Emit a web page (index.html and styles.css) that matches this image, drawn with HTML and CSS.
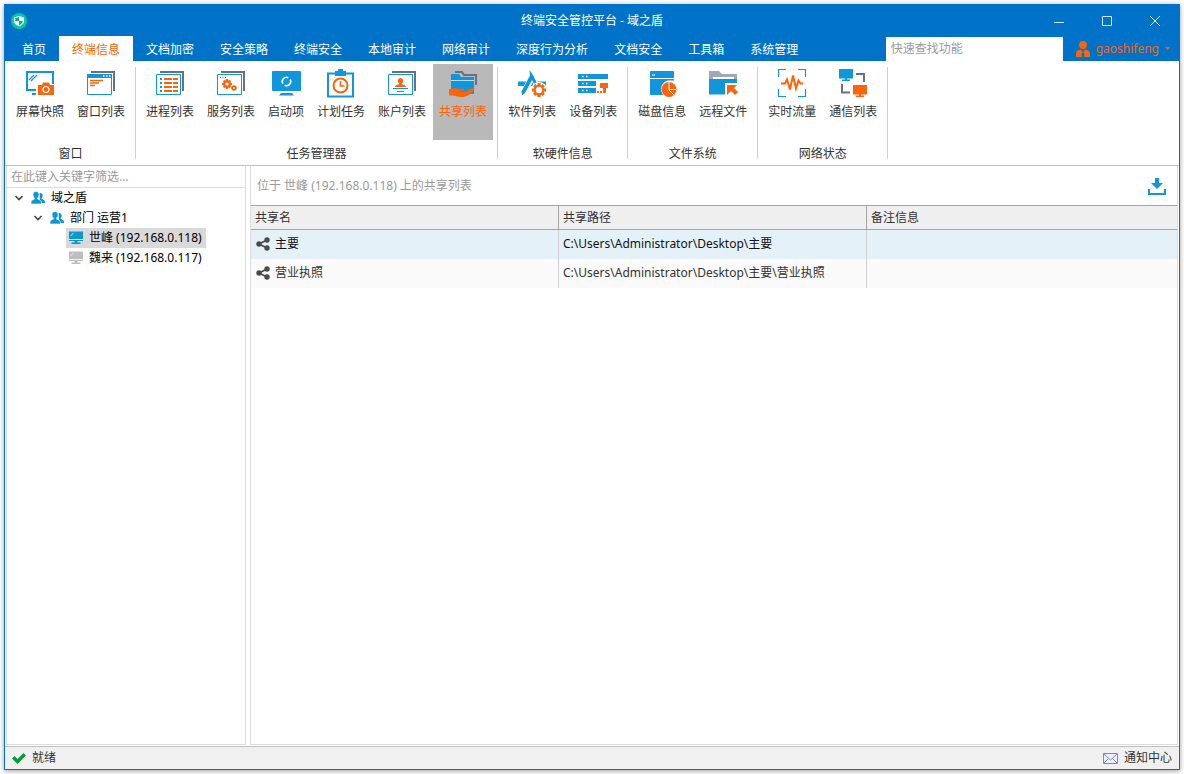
FILE: index.html
```html
<!DOCTYPE html>
<html lang="zh-CN">
<head>
<meta charset="utf-8">
<title>终端安全管控平台 - 域之盾</title>
<link rel="stylesheet" href="styles.css">
</head>
<body>
<svg class="defs" aria-hidden="true">
  <symbol id="people" viewBox="0 0 14 14"><path d="M8.500 2c2-.3 3.200 1 3.200 2.800 0 1.200-.7 2.200-1.200 2.700.3.800 3.500 1.200 3.500 3.500v1H9z"/><path d="M5 .5c2 0 3 1.400 3 3.300 0 1.500-.6 2.700-1.400 3.300v1C7.300 8.600 10.500 9.200 10.500 11.200V13H0v-1.800C0 9.200 2.700 8.600 3.400 8.100v-1C2.600 6.500 2 5.300 2 3.800 2 1.900 3 .5 5 .5z" stroke="#fff" stroke-width=".6"/></symbol>
  <symbol id="pc" viewBox="0 0 14 13"><path d="M0 0h14v9.500H0z"/><path d="M5.500 9h3v2h3v1.500h-9V11h3z"/><path d="M1.500 4.500L4.500 1.500M0 8h14" stroke="#fff" stroke-width=".8" fill="none"/></symbol>
  <symbol id="chevron" viewBox="0 0 10 8"><path d="M1.500 2L5 5.500 8.500 2" fill="none" stroke="#444" stroke-width="1.600"/></symbol>
  <symbol id="share" viewBox="0 0 14 14"><path d="M11 3L3 7l8 4" fill="none" stroke="#4a4a4a" stroke-width="1.800"/><g fill="#4a4a4a"><circle cx="11" cy="3" r="2.700"/><circle cx="3" cy="7" r="2.700"/><circle cx="11" cy="11" r="2.700"/></g></symbol>
  <symbol id="card" viewBox="0 0 30 30"><path d="M5 2h24v20h-2V4H5z" fill="#667189"/><path d="M1.500 5.500h24v20h-24z" fill="#fff" stroke="#1296db"/></symbol>
  <symbol id="gear" viewBox="-8 -8 16 16"><g stroke="#fa640a" stroke-width="3.500"><path d="M0-8v16M-8 0h16M-5.500-5.500L5.500 5.500M5.500-5.500L-5.500 5.500"/></g><circle r="6" fill="#fa640a"/><circle r="2.500" fill="#fff"/></symbol>
</svg>

<div class="window">
  <header class="titlebar">
    <svg class="logo" viewBox="0 0 16 16" aria-hidden="true"><circle cx="8" cy="8" r="8" fill="#08c7a0"/><path d="M8 3l5 1.500V8c0 2.500-2.300 4-5 5.500-2.700-1.500-5-3-5-5.500V4.500z" fill="#fff"/><path d="M8 4v4H4.200V5.200zM8 8h3.800c0 2-1.700 3.200-3.800 4.200z" fill="#08a88a"/></svg>
    <h1 class="title">终端安全管控平台 - 域之盾</h1>
    <div class="caption">
      <button type="button" aria-label="最小化"><svg viewBox="0 0 12 12"><path d="M1 7.500h10"/></svg></button>
      <button type="button" aria-label="最大化"><svg viewBox="0 0 12 12"><path d="M1.500 1.500h9v9h-9z"/></svg></button>
      <button type="button" aria-label="关闭"><svg viewBox="0 0 12 12"><path d="M1 1l10 10M11 1L1 11"/></svg></button>
    </div>
  </header>

  <div class="menubar">
    <nav class="tabs" aria-label="主菜单">
      <button type="button" class="tab">首页</button>
      <button type="button" class="tab active">终端信息</button>
      <button type="button" class="tab">文档加密</button>
      <button type="button" class="tab">安全策略</button>
      <button type="button" class="tab">终端安全</button>
      <button type="button" class="tab">本地审计</button>
      <button type="button" class="tab">网络审计</button>
      <button type="button" class="tab">深度行为分析</button>
      <button type="button" class="tab">文档安全</button>
      <button type="button" class="tab">工具箱</button>
      <button type="button" class="tab">系统管理</button>
    </nav>
    <input class="search" type="text" placeholder="快速查找功能" aria-label="快速查找功能">
    <button type="button" class="user">
      <svg class="avatar" viewBox="0 0 14 16" aria-hidden="true"><path d="M7 0c2.500 0 4 1.600 4 4S9.300 8.300 7 8.300 3 6.400 3 4s1.500-4 4-4z"/><path d="M4.500 8.500L7 11l2.500-2.500c2.500.5 4.500 1.500 4.500 4V16H8l.5-3.500L7 11.200 5.500 12.500 6 16H0v-3.500c0-2.500 2-3.500 4.500-4z"/></svg>
      <span>gaoshifeng</span>
      <svg class="caret" viewBox="0 0 5 3" aria-hidden="true"><path d="M0 0h5L2.500 3z"/></svg>
    </button>
  </div>

  <div class="ribbon">
    <section class="group">
      <div class="items">
        <button type="button" class="item"><svg viewBox="0 0 30 30"><path d="M2 21V3h26v12M1 21h10M7 25h4" fill="none" stroke="#1296db" stroke-width="2"/><path d="M4 11l5-5M6 12l6-6" stroke="#1296db" stroke-width="1.200"/><path d="M13 16h4l1-2.500h6l1 2.500h4v10H13z" fill="#fa640a"/><circle cx="21" cy="20.500" r="3" fill="none" stroke="#fff" stroke-width="1.200"/></svg>屏幕快照</button>
        <button type="button" class="item"><svg viewBox="0 0 30 30"><use href="#card"/><path d="M1 5h25v4H1z" fill="#1296db"/><path d="M17 7h1.500M20 7h1.500M23 7h1.500" stroke="#fff" stroke-width="1.500"/><path d="M4 11.500h13M4 14h9M4 16.500h5" stroke="#fa640a" stroke-width="1.300"/></svg>窗口列表</button>
      </div>
      <h2>窗口</h2>
    </section>
    <section class="group">
      <div class="items">
        <button type="button" class="item"><svg viewBox="0 0 30 30"><use href="#card"/><path d="M5 10h2M5 14h2M5 18h2M5 22h2" stroke="#1296db" stroke-width="2"/><path d="M9 10h14M9 14h14M9 18h14M9 22h14" stroke="#fa640a" stroke-width="2"/><path d="M17.500 8v16" stroke="#fff"/></svg>进程列表</button>
        <button type="button" class="item"><svg viewBox="0 0 30 30"><use href="#card"/><path d="M4 8.500h1M6.500 8.500h1M9 8.500h1" stroke="#1296db"/><use href="#gear" x="6" y="10" width="10" height="10"/><use href="#gear" x="15" y="16" width="6" height="6"/></svg>服务列表</button>
        <button type="button" class="item"><svg viewBox="0 0 30 30"><rect x="1" y="2" width="29" height="20" rx="1" fill="#1296db"/><path d="M10 24h11l2 2.500H8z" fill="#1296db"/><path d="M11.800 14.500a4.200 4.200 0 0 1 5.500-5.800M19.200 10.500a4.200 4.200 0 0 1-5.500 5.800" fill="none" stroke="#fff" stroke-width="1.600"/></svg>启动项</button>
        <button type="button" class="item"><svg viewBox="0 0 30 30"><path d="M2 4.500h25v23H2z" fill="#fff" stroke="#1296db" stroke-width="2"/><path d="M9 7V2h3V0h5v2h3v5z" fill="#1296db"/><circle cx="14.500" cy="16.500" r="7" fill="none" stroke="#fa640a" stroke-width="2"/><path d="M14.500 12v5h4" fill="none" stroke="#fa640a" stroke-width="1.500"/></svg>计划任务</button>
        <button type="button" class="item"><svg viewBox="0 0 30 30"><use href="#card"/><path d="M13.500 9a2.500 2.500 0 0 1 2.500 3c0 1.300-.5 2-1.200 2.500v.8c1 .3 4.200.7 4.200 2.700H8c0-2 3.200-2.400 4.200-2.700v-.8C11.500 14 11 13.300 11 12a2.500 2.500 0 0 1 2.500-3z" fill="#fa640a"/><path d="M6 19.500h15M10 22.500h7" stroke="#1296db"/></svg>账户列表</button>
        <button type="button" class="item selected"><svg viewBox="0 0 30 30"><path d="M7 3h7l2 3h12v10" fill="none" stroke="#667189" stroke-width="2"/><path d="M3 5h8l2 3h13v17H3z" fill="#1296db"/><path d="M3 11.500h23" stroke="#b9def2"/><path d="M1 20h3c2-1.500 4-1.200 6 0h6c1 .7.500 2-1 2h-4v.8c4 .7 8-.3 11-2.800 1.500-1 4-.8 4.500-.3-3 5-7 8.300-13.500 8.300-3 0-6-1.500-9-1.500H1z" fill="#fa640a"/></svg>共享列表</button>
      </div>
      <h2>任务管理器</h2>
    </section>
    <section class="group">
      <div class="items">
        <button type="button" class="item"><svg viewBox="0 0 30 30"><path d="M1 12.500h28v4.500H1z" fill="#1296db"/><path d="M13.500 4l8 16" stroke="#fff" stroke-width="5"/><path d="M16 6L6 25" stroke="#fff" stroke-width="6"/><path d="M12.500 1l2.500 3.500 8 15-3 1.500-7-14z" fill="#1296db"/><path d="M13.500 5.500l3.500 2-9 16.500-3 2.500-.5-4z" fill="#1296db"/><circle cx="22" cy="21" r="8" fill="#fff"/><use href="#gear" x="15" y="14" width="14" height="14"/><circle cx="22" cy="21" r="3.200" fill="#fff"/></svg>软件列表</button>
        <button type="button" class="item"><svg viewBox="0 0 30 30"><path d="M0 5h30v5H0zM0 12h18v5H0zM0 19h18v5H0z" fill="#1296db"/><path d="M4 7.500h1.500M8 7.500h1.500M4 14.500h1.500M8 14.500h1.500M4 21.500h1.500M8 21.500h1.500" stroke="#fff" stroke-width="1.500"/><path d="M22 14h9v5h-3v5h-3v-5h-3zM22 22h2v2h-2zM19 22h2v2h-2z" fill="#fa640a"/></svg>设备列表</button>
      </div>
      <h2>软硬件信息</h2>
    </section>
    <section class="group">
      <div class="items">
        <button type="button" class="item"><svg viewBox="0 0 30 30"><rect x="3" y="2" width="24" height="24" rx="1" fill="#1296db"/><path d="M3 9.500h24M5 6h3" stroke="#fff" stroke-width="1.200"/><path d="M22 11.500a8.500 8.500 0 1 0 6 15V11.500z" fill="#fff"/><circle cx="22" cy="20.500" r="7.500" fill="#fa640a"/><path d="M22 13v8l5 5M22 20.500h7" fill="none" stroke="#fff"/></svg>磁盘信息</button>
        <button type="button" class="item"><svg viewBox="0 0 30 30"><path d="M1 2h10l3 3h15v5H1z" fill="#a0a9b8"/><path d="M5 8h21v2H5z" fill="#fff"/><path d="M1 10h28v15.500H1z" fill="#1296db"/><path d="M17 14h13v12H17z" fill="#fff"/><path d="M19 16h10l-3 3 4 4-3 3-4-4-4 4z" fill="#fa640a"/></svg>远程文件</button>
      </div>
      <h2>文件系统</h2>
    </section>
    <section class="group">
      <div class="items">
        <button type="button" class="item"><svg viewBox="0 0 30 30"><path d="M1.500 8V.500H9M21 .5h7.500V8M28.500 20v7.500H21M9 27.500H1.500V20" fill="none" stroke="#1296db" stroke-width="1.200"/><path d="M4 14.500h4l2-4 3 10 3-14 3 13 2.500-8 2 3H26" fill="none" stroke="#fa640a" stroke-width="2"/></svg>实时流量</button>
        <button type="button" class="item"><svg viewBox="0 0 30 30"><path d="M1 0h14v9.500H1zM7 9h2v1.500h3V12H4v-1.500h3z" fill="#1296db"/><path d="M15 16h14v9.500H15zM21 25h2v1.500h3V28h-8v-1.500h3z" fill="#fa640a"/><path d="M18 5h8v8M4 15v8.500h8" fill="none" stroke="#667189" stroke-width="2"/></svg>通信列表</button>
      </div>
      <h2>网络状态</h2>
    </section>
  </div>

  <main class="workspace">
    <aside class="sidebar">
      <input class="filter" type="text" placeholder="在此键入关键字筛选..." aria-label="筛选终端">
      <ul class="tree">
        <li>
          <div class="node"><button type="button" class="toggle" aria-label="折叠"><svg><use href="#chevron"/></svg></button><span class="entry"><svg><use href="#people"/></svg>域之盾</span></div>
          <ul>
            <li>
              <div class="node"><button type="button" class="toggle" aria-label="折叠"><svg><use href="#chevron"/></svg></button><span class="entry"><svg><use href="#people"/></svg>部门 运营1</span></div>
              <ul>
                <li><div class="node leaf"><span class="entry current"><svg><use href="#pc"/></svg>世峰 (192.168.0.118)</span></div></li>
                <li><div class="node leaf"><span class="entry offline"><svg><use href="#pc"/></svg>魏来 (192.168.0.117)</span></div></li>
              </ul>
            </li>
          </ul>
        </li>
      </ul>
    </aside>
    <section class="content">
      <div class="content-head">
        <p>位于 世峰 (192.168.0.118) 上的共享列表</p>
        <button type="button" aria-label="导出"><svg viewBox="0 0 18 18"><path d="M7 1h4v5h4l-6 6-6-6h4z"/><path d="M0 12h2v4h14v-4h2v6H0z"/></svg></button>
      </div>
      <table class="shares">
        <thead><tr><th scope="col" class="col-name">共享名</th><th scope="col" class="col-path">共享路径</th><th scope="col">备注信息</th></tr></thead>
        <tbody>
          <tr class="active"><td><span class="share"><svg><use href="#share"/></svg>主要</span></td><td>C:\Users\Administrator\Desktop\主要</td><td></td></tr>
          <tr><td><span class="share"><svg><use href="#share"/></svg>营业执照</span></td><td>C:\Users\Administrator\Desktop\主要\营业执照</td><td></td></tr>
        </tbody>
      </table>
    </section>
  </main>

  <footer class="statusbar">
    <span class="status"><svg class="check" viewBox="0 0 14 12" aria-hidden="true"><path d="M0 6.500L2.500 4 5.500 7 11.500 1 14 3.500 5.500 12z" fill="#0a9a3c"/></svg>就绪</span>
    <button type="button" class="status"><svg class="mail" viewBox="0 0 15 11" aria-hidden="true"><path d="M.5.500h14v10H.5z" fill="#eef1fb" stroke="#7b8bb5"/><path d="M1 1l6.500 6L14 1M1 10l4.500-4.500M14 10L9.500 5.500" fill="none" stroke="#7b8bb5"/></svg>通知中心</button>
  </footer>
</div>
</body>
</html>
```

FILE: styles.css
```css
* {
  box-sizing: border-box;
}

body {
  margin: 0;
  padding: 4px;
  height: 100vh;
  background: #fff;
  color: #333;
  font: 12px/20px "Noto Sans", "Noto Sans CJK SC", sans-serif;
}

h1, h2, p, ul {
  margin: 0;
  padding: 0;
  font-size: inherit;
  font-weight: normal;
  list-style: none;
}

button, input {
  margin: 0;
  padding: 0;
  border: 0;
  border-radius: 0;
  background: none;
  color: inherit;
  font: inherit;
}

svg {
  display: block;
  flex: none;
}

.defs {
  position: absolute;
  width: 0;
  height: 0;
}

.window {
  display: flex;
  flex-direction: column;
  height: 100%;
  border: 1px solid #0073c8;
  background: #fff;
  box-shadow: 0 1px 5px rgba(0, 0, 0, 0.4);
}

/* Title bar */
.titlebar {
  display: grid;
  grid-template-columns: 1fr auto 1fr;
  align-items: center;
  height: 31px;
  flex: none;
  background: #0073c8;
  color: #fff;
}

.logo {
  width: 16px;
  height: 16px;
  margin-left: 6px;
}

.caption {
  display: flex;
  justify-content: flex-end;
}

.caption button {
  display: grid;
  place-items: center;
  width: 48px;
  height: 29px;
}

.caption svg {
  width: 12px;
  height: 12px;
  fill: none;
  stroke: #d5e6f4;
}

/* Menu */
.menubar {
  display: flex;
  align-items: stretch;
  height: 25px;
  flex: none;
  background: #0073c8;
  color: #fff;
}

.tabs {
  display: flex;
  flex: 1;
  padding-left: 4px;
}

.tab {
  padding: 2px 13px 0;
  white-space: nowrap;
}

.tab.active {
  background: #fff;
  color: #fa640a;
}

.search {
  width: 177px;
  margin-top: 1px;
  padding: 0 5px;
  background: #fff;
  color: #333;
}

.search::placeholder,
.filter::placeholder {
  color: #999;
  opacity: 1;
}

.user {
  display: flex;
  align-items: center;
  gap: 6px;
  padding: 0 9px 0 13px;
  color: #fa640a;
}

.user svg {
  fill: #fa640a;
}

.avatar {
  width: 14px;
  height: 16px;
}

.caret {
  width: 5px;
  height: 3px;
}

/* Ribbon */
.ribbon {
  display: flex;
  flex: none;
  height: 105px;
  padding: 3px 0 0 1px;
  border-bottom: 1px solid #c3c3c3;
}

.group {
  position: relative;
  display: flex;
  flex-direction: column;
  justify-content: space-between;
  padding: 0 4px 1px;
  margin-right: 1px;
}

.group::after {
  content: "";
  position: absolute;
  top: 3px;
  right: -1px;
  bottom: 6px;
  width: 1px;
  background: #d0d0d0;
}

.items {
  display: flex;
  gap: 1px;
}

.item {
  display: flex;
  flex-direction: column;
  align-items: center;
  gap: 3px;
  height: 76px;
  padding: 5px 6px 0;
  white-space: nowrap;
}

.item svg {
  width: 30px;
  height: 30px;
}

.item.selected {
  background: #b9b9b9;
  color: #fa640a;
}

.group h2 {
  text-align: center;
}

/* Workspace */
.workspace {
  display: flex;
  flex: 1;
  gap: 4px;
  min-height: 0;
  padding: 0 1px 1px;
}

.sidebar,
.content {
  border: 1px solid #ddd;
  border-top: 0;
}

.sidebar {
  width: 240px;
  flex: none;
}

.filter {
  display: block;
  width: 100%;
  height: 22px;
  padding: 0 4px;
  border-bottom: 1px solid #ddd;
}

.tree {
  color: #000;
}

.tree ul {
  padding-left: 19px;
}

.node {
  display: flex;
  align-items: center;
  height: 20px;
  padding-left: 7px;
}

.node.leaf {
  padding-left: 21px;
}

.toggle svg {
  width: 10px;
  height: 8px;
}

.toggle {
  margin-right: 4px;
}

.entry {
  display: flex;
  align-items: center;
  gap: 6px;
  padding: 0 4px 0 3px;
  white-space: nowrap;
}

.entry svg {
  width: 14px;
  height: 14px;
  fill: #0a97d2;
}

.entry.current {
  background: #d9d9d9;
}

.entry.offline svg {
  fill: #bdbdbd;
}

.content {
  flex: 1;
  min-width: 0;
}

.content-head {
  display: flex;
  align-items: center;
  justify-content: space-between;
  height: 39px;
  padding: 0 11px 0 6px;
  color: #999;
}

.content-head svg {
  width: 18px;
  height: 18px;
  fill: #1296db;
}

.shares {
  width: 100%;
  table-layout: fixed;
  border-collapse: separate;
  border-spacing: 0;
}

.shares th {
  height: 25px;
  padding: 0 4px;
  border: 1px solid #a5a5a5;
  border-left: 0;
  background: #efefef;
  font-weight: normal;
  text-align: left;
}

.shares td {
  height: 29px;
  padding: 0 4px 2px;
  border-right: 1px solid #d0d0d0;
  background: #fafafa;
}

.shares th:last-child,
.shares td:last-child {
  border-right: 0;
}

.shares .active td {
  background: #e5f1f9;
  color: #111;
}

.col-name,
.col-path {
  width: 308px;
}

.share {
  display: flex;
  align-items: center;
  gap: 5px;
  padding-left: 1px;
}

.share svg {
  width: 14px;
  height: 14px;
}

/* Status bar */
.statusbar {
  display: flex;
  align-items: center;
  justify-content: space-between;
  height: 23px;
  flex: none;
  padding: 0 7px;
  border-top: 1px solid #c0c0c0;
  background: #f0f0f0;
}

.status {
  display: flex;
  align-items: center;
  gap: 6px;
}

.check {
  width: 14px;
  height: 12px;
}

.mail {
  width: 15px;
  height: 11px;
}
```
